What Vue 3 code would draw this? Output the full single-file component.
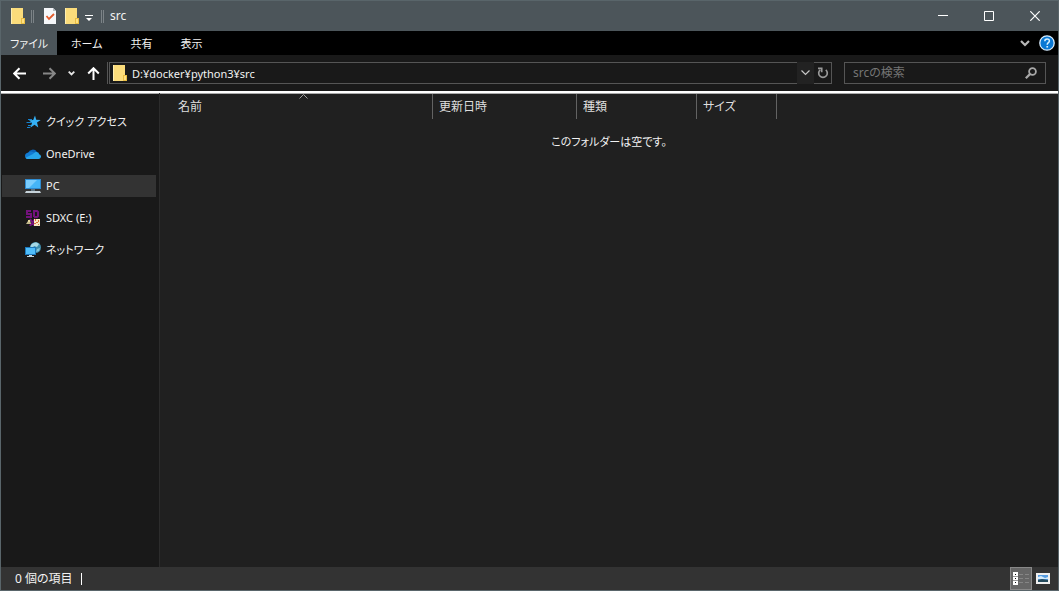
<template>
  <div class="window">
    <header class="titlebar">
      <svg class="folder" width="14" height="17" viewBox="0 0 14 17">
        <path d="M0 0h12v11h2v5H0z" fill="#fbdc7b" />
        <path d="M0 0h1v16H0z" fill="#ffeeb0" />
        <path d="M10 10h4v6h-4z" fill="#e9bd43" />
        <path d="M11 11h2v4h-2z" fill="#ffe080" />
      </svg>
      <span class="divider"></span>
      <button class="quick props" aria-label="プロパティ">
        <svg width="12" height="16" viewBox="0 0 12 16">
          <path d="M0 0h9l3 3v13H0z" fill="#f5f7fa" />
          <path d="M9 0v3h3z" fill="#b4bcc2" />
          <path d="M2.500 8l2.500 3 5-5" fill="none" stroke="#e35b2c" stroke-width="1.800" />
        </svg>
      </button>
      <button class="quick" aria-label="新しいフォルダー">
        <svg width="14" height="17" viewBox="0 0 14 17">
          <path d="M0 0h12v11h2v5H0z" fill="#fbdc7b" />
          <path d="M0 0h1v16H0z" fill="#ffeeb0" />
          <path d="M10 10h4v6h-4z" fill="#e9bd43" />
          <path d="M11 11h2v4h-2z" fill="#ffe080" />
        </svg>
      </button>
      <button class="quick more" aria-label="クイック アクセス ツール バーのカスタマイズ">
        <svg width="8" height="7" viewBox="0 0 8 7">
          <path d="M0 0h8v1H0zM1 3h6L4 6z" fill="#fff" />
        </svg>
      </button>
      <span class="divider"></span>
      <h1 class="title">src</h1>
      <div class="controls">
        <button aria-label="最小化">
          <svg width="10" height="10" viewBox="0 0 10 10"><path d="M0 4.500h10" stroke="#fff" /></svg>
        </button>
        <button aria-label="最大化">
          <svg width="10" height="10" viewBox="0 0 10 10"><path d="M.5.500h9v9h-9z" fill="none" stroke="#fff" /></svg>
        </button>
        <button aria-label="閉じる">
          <svg width="10" height="10" viewBox="0 0 10 10"><path d="M.300.300l9.400 9.400M9.700.300L.300 9.700" stroke="#fff" stroke-width="1.200" /></svg>
        </button>
      </div>
    </header>

    <nav class="ribbon">
      <button v-for="tab in tabs" :key="tab" class="tab" :class="{ file: tab === 'ファイル' }">{{ tab }}</button>
      <div class="ribbon-end">
        <button aria-label="リボンの展開">
          <svg width="10" height="7" viewBox="0 0 10 7"><path d="M1 1l4 4 4-4" fill="none" stroke="#b8b8b8" stroke-width="2.200" /></svg>
        </button>
        <button aria-label="ヘルプ">
          <svg width="16" height="16" viewBox="0 0 16 16">
            <circle cx="8" cy="8" r="7.200" fill="#0a78d4" stroke="#d9ecfb" stroke-width="1.300" />
            <path d="M5.800 6.200c0-3 4.600-3 4.600-.300 0 1.800-2.200 1.800-2.200 3.800" fill="none" stroke="#d4efff" stroke-width="1.500" />
            <path d="M7.400 11h1.700v1.600H7.400z" fill="#d4efff" />
          </svg>
        </button>
      </div>
    </nav>

    <div class="navbar">
      <div class="arrows">
        <button aria-label="戻る">
          <svg width="13" height="13" viewBox="0 0 13 13"><path d="M13 6.500H1.500M6.500 1.200L1.200 6.500l5.300 5.300" fill="none" stroke="#fff" stroke-width="2" /></svg>
        </button>
        <button aria-label="進む">
          <svg width="13" height="13" viewBox="0 0 13 13"><path d="M0 6.500h11.500M6.500 1.200l5.300 5.300-5.300 5.300" fill="none" stroke="#878787" stroke-width="2" /></svg>
        </button>
        <button class="recent" aria-label="最近表示した場所">
          <svg width="7" height="5" viewBox="0 0 7 5"><path d="M.700.700l2.800 2.800L6.300.700" fill="none" stroke="#e6e6e6" stroke-width="1.800" /></svg>
        </button>
        <button aria-label="上へ">
          <svg width="13" height="13" viewBox="0 0 13 13"><path d="M6.500 13V1.500M1.200 6.500l5.300-5.300 5.300 5.300" fill="none" stroke="#fff" stroke-width="2" /></svg>
        </button>
      </div>
      <div class="address">
        <div class="path">
          <svg width="14" height="17" viewBox="0 0 14 17">
            <path d="M0 0h12v11h2v5H0z" fill="#fbdc7b" />
            <path d="M0 0h1v16H0z" fill="#ffeeb0" />
            <path d="M10 10h4v6h-4z" fill="#e9bd43" />
            <path d="M11 11h2v4h-2z" fill="#ffe080" />
          </svg>
          <input v-model="path" type="text" aria-label="アドレス" />
        </div>
        <button class="history" aria-label="以前の場所">
          <svg width="9" height="6" viewBox="0 0 9 6"><path d="M.500.500l4 4 4-4" fill="none" stroke="#c8c8c8" stroke-width="1.200" /></svg>
        </button>
        <button class="refresh" aria-label="最新の情報に更新">
          <svg width="12" height="12" viewBox="0 0 12 12">
            <path d="M3.200 2.800A4.300 4.300 0 1 0 8.800 2.800" fill="none" stroke="#999" stroke-width="1.700" />
            <path d="M1 1.300h3.700v4" fill="none" stroke="#999" stroke-width="1.700" />
          </svg>
        </button>
      </div>
      <div class="search">
        <input v-model="query" type="text" placeholder="srcの検索" aria-label="srcの検索" />
        <button aria-label="検索">
          <svg width="12" height="12" viewBox="0 0 12 12">
            <circle cx="7.500" cy="4.500" r="3.400" fill="none" stroke="#a8a8a8" stroke-width="1.800" />
            <path d="M5.200 6.900L.800 11.200" stroke="#a8a8a8" stroke-width="2.200" />
          </svg>
        </button>
      </div>
    </div>

    <div class="body">
      <aside class="sidebar">
        <a v-for="item in places" :key="item.id" href="#" class="place" :class="{ selected: item.id === current }" @click.prevent="current = item.id">
          <svg v-if="item.id === 'quick'" width="16" height="16" viewBox="0 0 16 16">
            <path d="M10 1.500l1.200 4.300 4.500.100-3.700 2.700 1.300 4.800-3.800-2.700-4.200 3 1.700-4.800L4 6.200l4.200-.200z" fill="#35b1f5" />
            <path d="M3 5.500h4M1.500 8.500h5M3 11.500h3M2 13.500h3" stroke="#1683cf" />
          </svg>
          <svg v-else-if="item.id === 'onedrive'" width="16" height="16" viewBox="0 0 16 16">
            <path d="M3 7a5 5 0 0 1 9-1l-3 5H3z" fill="#0b64b8" />
            <path d="M3.500 6.500C1 6.700 0 8.200 0 10c0 2 1.500 3 3 3h6l3-5-4-2c-1.500-1-3-.500-4.500.500z" fill="#127bd2" />
            <path d="M8 8c2-3 6-2.500 6 .200 3 .600 2.500 4.800-.500 4.800H3c-1.200 0-2-.400-2.500-1.200z" fill="#28a5ea" />
          </svg>
          <svg v-else-if="item.id === 'pc'" width="16" height="16" viewBox="0 0 16 16">
            <path d="M0 1h16v10H0z" fill="#2e8bd0" />
            <path d="M1 2h14v8H1z" fill="#45b5f7" />
            <path d="M1 2h11L4 10H1z" fill="#7bcdfc" />
            <path d="M6 11h4v2H6z" fill="#5f7380" />
            <path d="M1 13h14l1 2H0z" fill="#c7d3da" />
          </svg>
          <svg v-else-if="item.id === 'sdxc'" width="16" height="16" viewBox="0 0 16 16">
            <path d="M6 1H2v3h4v3H1M9 0v7M9 1h3l1 1v4l-1 1H9M5 9l5 7M10 9l-5 7" fill="none" stroke="#73127c" stroke-width="2" />
            <path d="M1 14l2-3 2-1 1 4z" fill="#c4b98c" />
            <path d="M3 10h2v2H3z" fill="#e8d8a0" />
            <path d="M9 9h6v7H9z" fill="#f8e8c0" />
            <path d="M10 9h1v2h-1zM13 10h1v2h-1zM11 12h2v1h-2zM9 13h2v1H9zM13 14h1v1h-1z" fill="#d9703a" />
          </svg>
          <svg v-else width="16" height="16" viewBox="0 0 16 16">
            <circle cx="10.500" cy="5.500" r="5.500" fill="#3f8fae" />
            <path d="M6 3c2-3 6-3.500 8-1l-2 3-3-1-2 3-2-1z" fill="#a6d9e5" />
            <path d="M12 7l3-1-1 3-3 1z" fill="#83c5d8" />
            <path d="M0 5h11v8H0z" fill="#1c79bd" />
            <path d="M1 6h9v6H1z" fill="#4fbdfa" />
            <path d="M4 13h3v1h2v1H2v-1h2z" fill="#c1d5df" />
          </svg>
          <span>{{ item.label }}</span>
        </a>
      </aside>

      <main class="files">
        <table>
          <thead>
            <tr>
              <th v-for="col in columns" :key="col.id" scope="col" :class="col.id">
                <svg v-if="col.id === sortBy" class="caret" width="9" height="5" viewBox="0 0 9 5"><path d="M.500 4.500l4-4 4 4" fill="none" stroke="#a0a0a0" /></svg>
                {{ col.label }}
              </th>
            </tr>
          </thead>
        </table>
        <p class="empty">このフォルダーは空です。</p>
      </main>
    </div>

    <footer class="status">
      <span class="count">0 個の項目</span>
      <div class="views">
        <button class="active" aria-label="詳細表示">
          <svg width="16" height="13" viewBox="0 0 16 13">
            <path d="M0 0h5v13H0z" fill="#fff" />
            <path d="M2 2h1v1H2zM2 6h1v1H2zM2 10h1v1H2z" fill="#111" />
            <path d="M0 4h5v1H0zM0 8h5v1H0z" fill="#999" />
            <path d="M6 2.500h4M12 2.500h4M6 6.500h4M12 6.500h4M6 10.500h4M12 10.500h4" stroke="#858585" />
          </svg>
        </button>
        <button aria-label="大きいアイコン">
          <svg width="14" height="11" viewBox="0 0 14 11">
            <path d="M0 0h14v11H0z" fill="#eee" />
            <path d="M2 2h10v7H2z" fill="#559be0" />
            <path d="M2 4l3-1 4 2 3-1v2H2z" fill="#d4eafa" />
            <path d="M2 7l4-1 6 1v2H2z" fill="#244a5c" />
          </svg>
        </button>
      </div>
    </footer>
  </div>
</template>

<script setup>
import { ref } from 'vue'

const tabs = ['ファイル', 'ホーム', '共有', '表示']

const places = [
  { id: 'quick', label: 'クイック アクセス' },
  { id: 'onedrive', label: 'OneDrive' },
  { id: 'pc', label: 'PC' },
  { id: 'sdxc', label: 'SDXC (E:)' },
  { id: 'network', label: 'ネットワーク' }
]

const columns = [
  { id: 'name', label: '名前' },
  { id: 'date', label: '更新日時' },
  { id: 'kind', label: '種類' },
  { id: 'size', label: 'サイズ' }
]

const path = ref('D:¥docker¥python3¥src')
const query = ref('')
const current = ref('pc')
const sortBy = ref('name')
</script>

<style>
body {
  margin: 0;
  background: #191919;
}
</style>

<style scoped>
.window {
  box-sizing: border-box;
  min-height: 100vh;
  display: flex;
  flex-direction: column;
  border: 1px solid #59656a;
  background: #191919;
  color: #f2f2f2;
  font: 12px/16px "Noto Sans", "Noto Sans CJK JP", sans-serif;
  font-feature-settings: "palt";
}

svg {
  display: block;
  flex: none;
}

button {
  display: flex;
  align-items: center;
  justify-content: center;
  margin: 0;
  padding: 0;
  border: 0;
  background: none;
  color: inherit;
  font: inherit;
  font-feature-settings: inherit;
}

input {
  flex: 1;
  min-width: 0;
  padding: 0;
  border: 0;
  outline: 0;
  background: none;
  color: inherit;
  font: inherit;
  font-feature-settings: inherit;
}

.titlebar {
  display: flex;
  align-items: center;
  height: 30px;
  padding-left: 10px;
  background: #4c555a;
}

.divider {
  box-sizing: border-box;
  width: 3px;
  height: 13px;
  margin: 0 6px;
  border: 1px solid #7c8387;
  border-width: 0 1px;
}

.props {
  margin: 0 9px 0 4px;
}

.more {
  margin: 4px 2px 0 6px;
}

.title {
  margin: 0;
  font-size: 12px;
  font-weight: 400;
}

.controls {
  display: flex;
  align-self: stretch;
  margin-left: auto;
}

.controls button {
  width: 46px;
}

.ribbon {
  display: flex;
  height: 24px;
  background: #000;
}

.tab {
  padding: 1px 14px 0;
  font-size: 11px;
}

.tab.file {
  width: 56px;
  padding: 1px 0 0;
  background: #4c555a;
}

.ribbon-end {
  display: flex;
  align-items: center;
  gap: 9px;
  margin-left: auto;
  padding-right: 3px;
}

.navbar {
  display: flex;
  align-items: center;
  height: 36px;
  padding: 0 12px;
}

.arrows {
  display: flex;
  align-items: center;
  gap: 12px;
  margin-right: 7px;
}

.arrows button:first-child {
  margin-right: 5px;
}

.address {
  box-sizing: border-box;
  flex: 1;
  display: flex;
  height: 22px;
  border-left: 1px solid #555;
}

.path {
  flex: 1;
  display: flex;
  align-items: center;
  gap: 5px;
  margin-left: 1px;
  padding-left: 3px;
  border: 1px solid #555;
  border-right: 0;
}

.path input {
  padding-top: 1px;
  font-size: 11px;
}

.history {
  width: 17px;
  background: #222;
}

.refresh {
  width: 18px;
  border: 1px solid #555;
  border-left: 0;
}

.search {
  box-sizing: border-box;
  display: flex;
  align-items: center;
  width: 202px;
  height: 22px;
  margin-left: 12px;
  padding: 0 8px;
  border: 1px solid #555;
}

.search input::placeholder {
  color: #757575;
  opacity: 1;
}

.body {
  flex: 1;
  display: flex;
  border-top: 2px solid #fff;
  box-shadow: inset 0 1px #aaa;
}

.sidebar {
  box-sizing: border-box;
  display: flex;
  flex-direction: column;
  gap: 10px;
  width: 159px;
  padding: 18px 3px 0 1px;
  border-right: 1px solid #2c2c2c;
  font-size: 11px;
}

.place {
  display: flex;
  align-items: center;
  gap: 5px;
  height: 22px;
  padding-left: 23px;
  color: inherit;
  text-decoration: none;
  white-space: nowrap;
}

.place.selected {
  background: #333;
}

.files {
  flex: 1;
  margin-top: 1px;
  background: #202020;
}

table {
  table-layout: fixed;
  width: 617px;
  border-collapse: separate;
  border-spacing: 0;
}

th {
  position: relative;
  height: 25px;
  padding: 0 0 0 6px;
  border-right: 1px solid #636363;
  color: #dedede;
  font-weight: 400;
  text-align: left;
}

.name {
  width: 254px;
  padding-left: 18px;
}

.date {
  width: 137px;
}

.kind {
  width: 113px;
}

.caret {
  position: absolute;
  top: 0;
  left: 51%;
}

.empty {
  margin: 15px 0 0;
  font-size: 11px;
  text-align: center;
}

.status {
  display: flex;
  align-items: center;
  height: 23px;
  padding-left: 14px;
  background: #333;
}

.count {
  padding-right: 8px;
  border-right: 1px solid #fff;
  line-height: 12px;
}

.views {
  display: flex;
  align-self: stretch;
  margin-left: auto;
  padding-right: 4px;
}

.views button {
  width: 22px;
}

.views .active {
  border: 1px solid #888;
  background: #666;
}
</style>
